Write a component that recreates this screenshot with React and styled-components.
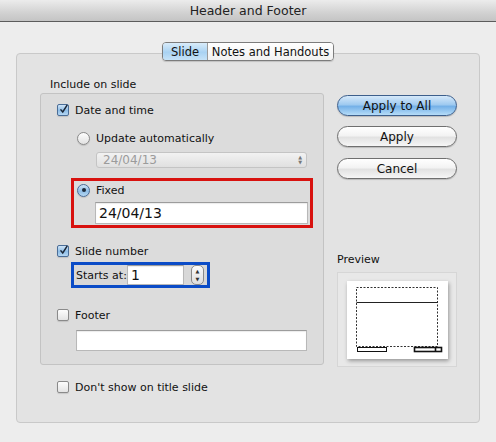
import React from "react";
import styled, { createGlobalStyle, css } from "styled-components";

const GlobalStyle = createGlobalStyle`
  html, body {
    margin: 0;
    padding: 0;
    background: #ededed;
  }
  body {
    font-family: "DejaVu Sans", "Liberation Sans", sans-serif;
    font-size: 11px;
    color: #111;
  }
`;

const Window = styled.div`
  width: 496px;
  height: 442px;
  background: #ededed;
  display: flex;
  flex-direction: column;
  overflow: hidden;
`;

const TitleBar = styled.div`
  height: 21px;
  flex: none;
  display: flex;
  align-items: center;
  justify-content: center;
  background: linear-gradient(#ececec, #d2d2d2 60%, #c4c4c4);
  border-bottom: 1px solid #5c5c5c;
  font-size: 12.5px;
  color: #222;
`;

const Body = styled.div`
  padding: 20px 16px 0 16px;
  display: flex;
  flex-direction: column;
  align-items: center;
`;

const Tabs = styled.div`
  position: relative;
  z-index: 1;
  display: flex;
  height: 17px;
  margin-bottom: -8px;
  border: 1px solid #7c7c7c;
  border-radius: 4px;
  overflow: hidden;
  box-shadow: 0 1px 1px rgba(0, 0, 0, 0.15);
`;

const Tab = styled.div`
  box-sizing: border-box;
  width: ${(p) => p.$w}px;
  display: flex;
  align-items: center;
  justify-content: center;
  font-size: 11.5px;
  color: #111;
  background: linear-gradient(#ffffff, #f1f1f1);
  & + & {
    border-left: 1px solid #9a9a9a;
  }
  ${(p) =>
    p.$active &&
    css`
      background: linear-gradient(#d9ecfa, #a9d2f2 55%, #c6e3f8);
    `}
`;

const Panel = styled.div`
  width: 464px;
  height: 370px;
  box-sizing: border-box;
  background: #e3e3e3;
  border: 1px solid #c9c9c9;
  border-radius: 4px;
  padding: 23px 0 0 23px;
  display: flex;
  gap: 13px;
  align-items: flex-start;
`;

const LeftCol = styled.div`
  width: 284px;
  display: flex;
  flex-direction: column;
`;

const GroupLabel = styled.div`
  height: 16px;
  line-height: 16px;
  padding-left: 10px;
`;

const Group = styled.div`
  box-sizing: border-box;
  height: 272px;
  background: #dcdcdc;
  border: 1px solid #c3c3c3;
  border-radius: 3px;
  padding: 8px 0 0 16px;
  display: flex;
  flex-direction: column;
  align-items: flex-start;
`;

const Row = styled.div`
  display: flex;
  align-items: center;
  gap: 6px;
  height: 16px;
  white-space: nowrap;
  margin-top: ${(p) => p.$top || 0}px;
  margin-left: ${(p) => p.$left || 0}px;
`;

const Check = styled.span`
  box-sizing: border-box;
  width: 12px;
  height: 12px;
  border-radius: 2px;
  border: 1px solid #8a8a8a;
  background: linear-gradient(#fdfdfd, #e4e4e4);
  box-shadow: 0 1px 1px rgba(0, 0, 0, 0.12);
  display: flex;
  align-items: center;
  justify-content: center;
  flex: none;
  ${(p) =>
    p.$on &&
    css`
      border-color: #4a6d97;
      background: linear-gradient(#cfe4f7, #8ebde6 55%, #b5d7f3);
    `}
`;

const Radio = styled.span`
  box-sizing: border-box;
  width: 13px;
  height: 13px;
  border-radius: 50%;
  border: 1px solid #8a8a8a;
  background: linear-gradient(#fdfdfd, #e2e2e2);
  box-shadow: 0 1px 1px rgba(0, 0, 0, 0.12);
  display: flex;
  align-items: center;
  justify-content: center;
  flex: none;
  ${(p) =>
    p.$on &&
    css`
      border-color: #4a6d97;
      background: linear-gradient(#cfe4f7, #8ebde6 55%, #b5d7f3);
      &::after {
        content: "";
        width: 4px;
        height: 4px;
        border-radius: 50%;
        background: #1d2a3a;
      }
    `}
`;

const Select = styled.div`
  box-sizing: border-box;
  width: 211px;
  height: 16px;
  margin: 6px 0 0 39px;
  border: 1px solid #c4c4c4;
  border-radius: 3px;
  background: linear-gradient(#f2f2f2, #e0e0e0);
  display: flex;
  align-items: center;
  justify-content: space-between;
  padding: 0 4px 0 6px;
  color: #9b9b9b;
  font-size: 12px;
`;

const Arrows = styled.span`
  display: flex;
  flex-direction: column;
  font-size: 5px;
  line-height: 5px;
  color: #777;
`;

const Highlight = styled.div`
  box-sizing: border-box;
  width: ${(p) => p.$w}px;
  margin: ${(p) => p.$top}px 0 0 14px;
  border: 3px solid ${(p) => p.$color};
  display: flex;
  flex-direction: ${(p) => (p.$row ? "row" : "column")};
  align-items: ${(p) => (p.$row ? "center" : "flex-start")};
  background: ${(p) => p.$bg || "transparent"};
`;

const Field = styled.div`
  box-sizing: border-box;
  width: ${(p) => p.$w}px;
  height: ${(p) => p.$h}px;
  margin: ${(p) => p.$m || 0};
  background: #fff;
  border: 1px solid #b8b8b8;
  border-top-color: #9c9c9c;
  box-shadow: inset 0 1px 1px rgba(0, 0, 0, 0.08);
  display: flex;
  align-items: center;
  padding-left: 3px;
  font-size: 14px;
  color: #111;
  flex: none;
`;

const StartsLabel = styled.span`
  box-sizing: border-box;
  width: 53px;
  flex: none;
  padding-left: 2px;
  white-space: nowrap;
`;

const Stepper = styled.div`
  box-sizing: border-box;
  width: 13px;
  height: 20px;
  margin-left: 7px;
  border: 1px solid #8a8a8a;
  border-radius: 5px;
  background: linear-gradient(#fbfbfb, #dedede);
  display: flex;
  flex-direction: column;
  align-items: center;
  justify-content: space-between;
  padding: 2px 0;
  font-size: 5px;
  line-height: 6px;
  color: #333;
`;

const RightCol = styled.div`
  width: 120px;
  margin-top: 18px;
  display: flex;
  flex-direction: column;
`;

const Button = styled.div`
  box-sizing: border-box;
  height: 21px;
  margin-top: ${(p) => p.$top || 0}px;
  border-radius: 11px;
  border: 1px solid #6f6f6f;
  background: linear-gradient(#ffffff, #f3f3f3 45%, #e2e2e2 55%, #f6f6f6);
  box-shadow: 0 1px 1px rgba(0, 0, 0, 0.18);
  display: flex;
  align-items: center;
  justify-content: center;
  font-size: 12px;
  color: #111;
  ${(p) =>
    p.$primary &&
    css`
      border-color: #3d5f8c;
      background: linear-gradient(#d6e9fa, #9fcaf0 45%, #75b1e8 55%, #b5dcf8);
    `}
`;

const PreviewLabel = styled.div`
  margin-top: 73px;
  height: 15px;
  line-height: 15px;
`;

const PreviewBox = styled.div`
  box-sizing: border-box;
  margin-top: 5px;
  width: 120px;
  height: 95px;
  background: #e8e8e8;
  border: 1px solid #d6d6d6;
  display: flex;
  align-items: center;
  justify-content: center;
`;

const Page = styled.div`
  width: 101px;
  height: 78px;
  background: #fff;
  box-shadow: 1px 2px 4px rgba(0, 0, 0, 0.35);
  display: flex;
`;

const Bottom = styled(Row)`
  margin: 14px 0 0 17px;
`;

function CheckMark() {
  return (
    <svg width="12" height="12" viewBox="0 0 12 12" style={{ marginTop: -3, marginLeft: 1 }}>
      <path d="M2 6.5 L5 10 L11 0.5" fill="none" stroke="#1b2636" strokeWidth="2" />
    </svg>
  );
}

function PageDrawing() {
  return (
    <svg width="101" height="78" viewBox="0 0 101 78">
      <rect x="9.5" y="6.5" width="81" height="59" fill="none" stroke="#333" strokeDasharray="2 1.5" />
      <line x1="9.5" y1="21.5" x2="90.5" y2="21.5" stroke="#222" />
      <rect x="10.5" y="66.5" width="29" height="4" fill="none" stroke="#111" />
      <rect x="67.5" y="66.5" width="27" height="4" fill="none" stroke="#111" strokeWidth="1.6" />
      <line x1="88.5" y1="66" x2="88.5" y2="71" stroke="#111" strokeWidth="1.6" />
    </svg>
  );
}

export default function App() {
  return (
    <>
      <GlobalStyle />
      <Window>
        <TitleBar>Header and Footer</TitleBar>
        <Body>
          <Tabs>
            <Tab $active $w={44}>Slide</Tab>
            <Tab $w={126}>Notes and Handouts</Tab>
          </Tabs>
          <Panel>
            <LeftCol>
              <GroupLabel>Include on slide</GroupLabel>
              <Group>
                <Row>
                  <Check $on>
                    <CheckMark />
                  </Check>
                  Date and time
                </Row>
                <Row $top={12} $left={20}>
                  <Radio />
                  Update automatically
                </Row>
                <Select>
                  24/04/13
                  <Arrows>
                    <span>▲</span>
                    <span>▼</span>
                  </Arrows>
                </Select>
                <Highlight $w={242} $top={10} $color="#d8120f">
                  <Row $top={1} $left={3}>
                    <Radio $on />
                    Fixed
                  </Row>
                  <Field $w={213} $h={22} $m="4px 0 1px 21px">
                    24/04/13
                  </Field>
                </Highlight>
                <Row $top={15}>
                  <Check $on>
                    <CheckMark />
                  </Check>
                  Slide number
                </Row>
                <Highlight $w={139} $top={3} $color="#0b4cc7" $row $bg="#d8d8d8">
                  <StartsLabel>Starts at:</StartsLabel>
                  <Field $w={57} $h={20}>
                    1
                  </Field>
                  <Stepper>
                    <span>▲</span>
                    <span>▼</span>
                  </Stepper>
                </Highlight>
                <Row $top={19}>
                  <Check />
                  Footer
                </Row>
                <Field $w={231} $h={21} $m="7px 0 0 19px" />
              </Group>
              <Bottom>
                <Check />
                Don't show on title slide
              </Bottom>
            </LeftCol>
            <RightCol>
              <Button $primary>Apply to All</Button>
              <Button $top={10}>Apply</Button>
              <Button $top={11}>Cancel</Button>
              <PreviewLabel>Preview</PreviewLabel>
              <PreviewBox>
                <Page>
                  <PageDrawing />
                </Page>
              </PreviewBox>
            </RightCol>
          </Panel>
        </Body>
      </Window>
    </>
  );
}
